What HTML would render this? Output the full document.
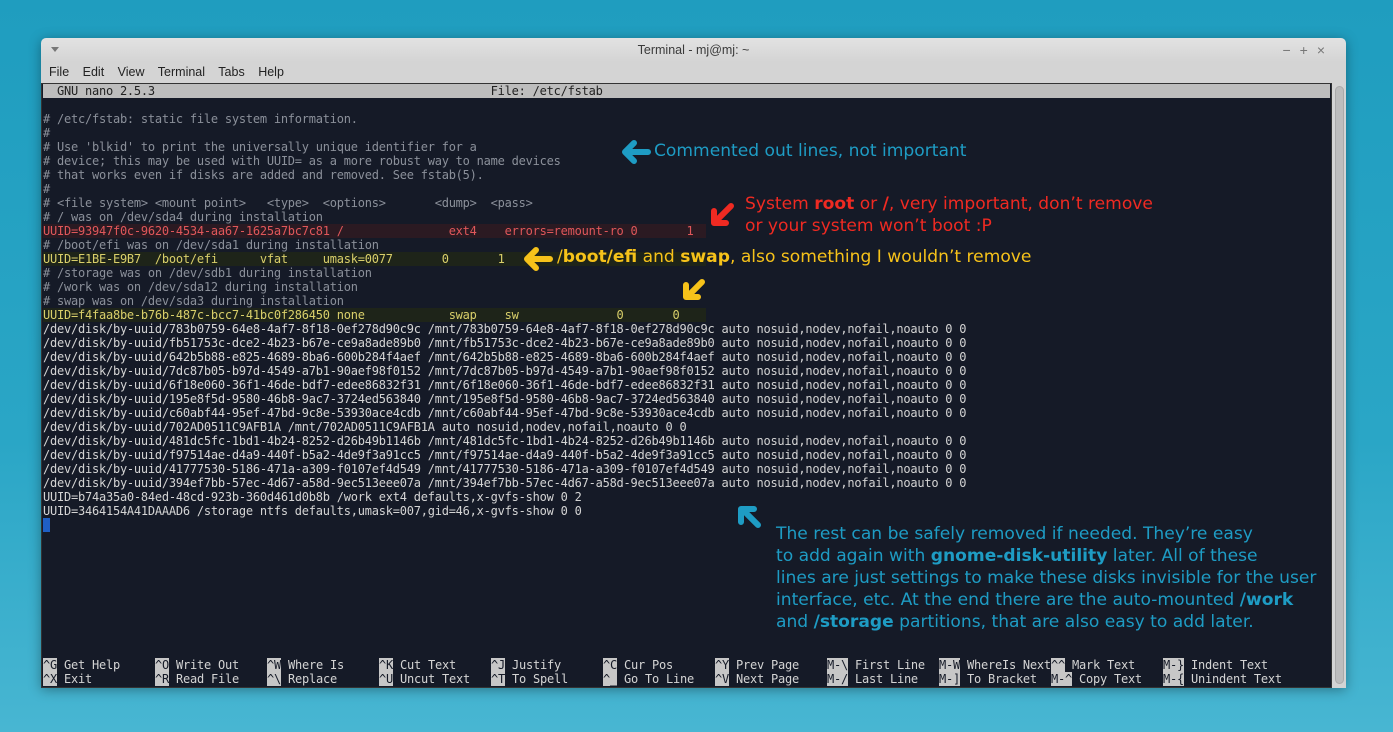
<!DOCTYPE html>
<html><head><meta charset="utf-8"><style>
*{margin:0;padding:0;box-sizing:border-box}
body{width:1393px;height:732px;overflow:hidden;position:relative;background:linear-gradient(180deg,#1f9dbf 0%,#2aa6c6 60%,#48b6d2 100%);font-family:"Liberation Sans",sans-serif}
.win{position:absolute;left:41px;top:38px;width:1305px;height:650px;background:linear-gradient(#e2e2e2,#d4d4d4 24px,#d4d4d4);border-radius:5px 5px 0 0;box-shadow:0 2px 12px rgba(0,0,0,.35)}
.title{position:absolute;left:0;top:5px;width:1305px;text-align:center;font-size:12.5px;color:#3a3a3a}
.menu{position:absolute;left:8px;top:27px;font-size:12.5px;color:#222;word-spacing:0}
.menu span{margin-right:10px}
.term{position:absolute;left:0;top:45px;width:1291px;height:605px;background:#151a27;border:1px solid #333}
.sb{position:absolute;left:1292px;top:45px;width:13px;height:605px;background:#d4d4d4}
.sb div{position:absolute;left:2px;top:3px;width:9px;height:598px;background:#bdbdbd;border-radius:5px;border:1px solid #aaa}
pre{position:absolute;font-family:"DejaVu Sans Mono",monospace;font-size:12px;line-height:14px;color:#d4d4d4;letter-spacing:-0.23px}
.r{position:absolute;left:1px;height:14px;white-space:pre}
.c{color:#8b909a}
.hd{position:absolute;left:1px;top:0;width:1287px;height:14px;background:#bdbdbd;color:#222}
.red{color:#e0575a;background:#2b1a22;width:663px}
.yel{color:#d9cf6a;background:#1e2419;width:663px}
.k{background:#c7c7c7;color:#151a27}
.a{position:absolute;font-family:"DejaVu Sans",sans-serif;font-size:17.1px;white-space:nowrap}
.bl{color:#1e9cc4}.rd{color:#ef2a22}.yl{color:#f6c21a}
</style></head><body>
<div class="win">
<div style="position:absolute;left:10px;top:9px;width:0;height:0;border-left:4px solid transparent;border-right:4px solid transparent;border-top:5px solid #777"></div>
<div class="title">Terminal - mj@mj: ~</div>
<div style="position:absolute;right:12px;top:4px;font-size:14px;color:#777;letter-spacing:9px">−+×</div>
<div class="menu"><span>File</span> <span>Edit</span> <span>View</span> <span>Terminal</span> <span>Tabs</span> <span>Help</span></div>
<div class="term">
<pre style="left:0;top:0;width:1290px;height:603px">
<div class="hd">  GNU nano 2.5.3                                                File: /etc/fstab</div>
<div class="r c" style="top:28px"># /etc/fstab: static file system information.</div>
<div class="r c" style="top:42px">#</div>
<div class="r c" style="top:56px"># Use 'blkid' to print the universally unique identifier for a</div>
<div class="r c" style="top:70px"># device; this may be used with UUID= as a more robust way to name devices</div>
<div class="r c" style="top:84px"># that works even if disks are added and removed. See fstab(5).</div>
<div class="r c" style="top:98px">#</div>
<div class="r c" style="top:112px"># &lt;file system&gt; &lt;mount point&gt;   &lt;type&gt;  &lt;options&gt;       &lt;dump&gt;  &lt;pass&gt;</div>
<div class="r c" style="top:126px"># / was on /dev/sda4 during installation</div>
<div class="r red" style="top:140px">UUID=93947f0c-9620-4534-aa67-1625a7bc7c81 /               ext4    errors=remount-ro 0       1</div>
<div class="r c" style="top:154px"># /boot/efi was on /dev/sda1 during installation</div>
<div class="r yel" style="top:168px">UUID=E1BE-E9B7  /boot/efi      vfat     umask=0077       0       1</div>
<div class="r c" style="top:182px"># /storage was on /dev/sdb1 during installation</div>
<div class="r c" style="top:196px"># /work was on /dev/sda12 during installation</div>
<div class="r c" style="top:210px"># swap was on /dev/sda3 during installation</div>
<div class="r yel" style="top:224px">UUID=f4faa8be-b76b-487c-bcc7-41bc0f286450 none            swap    sw              0       0</div>
<div class="r" style="top:238px">/dev/disk/by-uuid/783b0759-64e8-4af7-8f18-0ef278d90c9c /mnt/783b0759-64e8-4af7-8f18-0ef278d90c9c auto nosuid,nodev,nofail,noauto 0 0
/dev/disk/by-uuid/fb51753c-dce2-4b23-b67e-ce9a8ade89b0 /mnt/fb51753c-dce2-4b23-b67e-ce9a8ade89b0 auto nosuid,nodev,nofail,noauto 0 0
/dev/disk/by-uuid/642b5b88-e825-4689-8ba6-600b284f4aef /mnt/642b5b88-e825-4689-8ba6-600b284f4aef auto nosuid,nodev,nofail,noauto 0 0
/dev/disk/by-uuid/7dc87b05-b97d-4549-a7b1-90aef98f0152 /mnt/7dc87b05-b97d-4549-a7b1-90aef98f0152 auto nosuid,nodev,nofail,noauto 0 0
/dev/disk/by-uuid/6f18e060-36f1-46de-bdf7-edee86832f31 /mnt/6f18e060-36f1-46de-bdf7-edee86832f31 auto nosuid,nodev,nofail,noauto 0 0
/dev/disk/by-uuid/195e8f5d-9580-46b8-9ac7-3724ed563840 /mnt/195e8f5d-9580-46b8-9ac7-3724ed563840 auto nosuid,nodev,nofail,noauto 0 0
/dev/disk/by-uuid/c60abf44-95ef-47bd-9c8e-53930ace4cdb /mnt/c60abf44-95ef-47bd-9c8e-53930ace4cdb auto nosuid,nodev,nofail,noauto 0 0
/dev/disk/by-uuid/702AD0511C9AFB1A /mnt/702AD0511C9AFB1A auto nosuid,nodev,nofail,noauto 0 0
/dev/disk/by-uuid/481dc5fc-1bd1-4b24-8252-d26b49b1146b /mnt/481dc5fc-1bd1-4b24-8252-d26b49b1146b auto nosuid,nodev,nofail,noauto 0 0
/dev/disk/by-uuid/f97514ae-d4a9-440f-b5a2-4de9f3a91cc5 /mnt/f97514ae-d4a9-440f-b5a2-4de9f3a91cc5 auto nosuid,nodev,nofail,noauto 0 0
/dev/disk/by-uuid/41777530-5186-471a-a309-f0107ef4d549 /mnt/41777530-5186-471a-a309-f0107ef4d549 auto nosuid,nodev,nofail,noauto 0 0
/dev/disk/by-uuid/394ef7bb-57ec-4d67-a58d-9ec513eee07a /mnt/394ef7bb-57ec-4d67-a58d-9ec513eee07a auto nosuid,nodev,nofail,noauto 0 0
UUID=b74a35a0-84ed-48cd-923b-360d461d0b8b /work ext4 defaults,x-gvfs-show 0 2
UUID=3464154A41DAAAD6 /storage ntfs defaults,umask=007,gid=46,x-gvfs-show 0 0</div>
<div style="position:absolute;left:1px;top:434px;width:7px;height:14px;background:#1f5fc4"></div>
<div class="r" style="top:574px"><span class="k">^G</span> Get Help</div><div class="r" style="top:588px"><span class="k">^X</span> Exit</div>
<div class="r" style="top:574px;left:113px"><span class="k">^O</span> Write Out</div><div class="r" style="top:588px;left:113px"><span class="k">^R</span> Read File</div>
<div class="r" style="top:574px;left:225px"><span class="k">^W</span> Where Is</div><div class="r" style="top:588px;left:225px"><span class="k">^\</span> Replace</div>
<div class="r" style="top:574px;left:337px"><span class="k">^K</span> Cut Text</div><div class="r" style="top:588px;left:337px"><span class="k">^U</span> Uncut Text</div>
<div class="r" style="top:574px;left:449px"><span class="k">^J</span> Justify</div><div class="r" style="top:588px;left:449px"><span class="k">^T</span> To Spell</div>
<div class="r" style="top:574px;left:561px"><span class="k">^C</span> Cur Pos</div><div class="r" style="top:588px;left:561px"><span class="k">^_</span> Go To Line</div>
<div class="r" style="top:574px;left:673px"><span class="k">^Y</span> Prev Page</div><div class="r" style="top:588px;left:673px"><span class="k">^V</span> Next Page</div>
<div class="r" style="top:574px;left:785px"><span class="k">M-\</span> First Line</div><div class="r" style="top:588px;left:785px"><span class="k">M-/</span> Last Line</div>
<div class="r" style="top:574px;left:897px"><span class="k">M-W</span> WhereIs Next</div><div class="r" style="top:588px;left:897px"><span class="k">M-]</span> To Bracket</div>
<div class="r" style="top:574px;left:1009px"><span class="k">^^</span> Mark Text</div><div class="r" style="top:588px;left:1009px"><span class="k">M-^</span> Copy Text</div>
<div class="r" style="top:574px;left:1121px"><span class="k">M-}</span> Indent Text</div><div class="r" style="top:588px;left:1121px"><span class="k">M-{</span> Unindent Text</div>
</pre>
</div>
<div class="sb"><div></div></div>
</div>
<svg style="position:absolute;left:0;top:0" width="1393" height="732">
<g fill="none" stroke-linecap="round" stroke-linejoin="round" stroke-width="6">
<path d="M648 152 H626 M634 143 L625 152 L634 161" stroke="#1e9cc4"/>
<path d="M731 206 L715 222 M714 211 V223 H726" stroke="#ef2a22"/>
<path d="M550 259 H528 M536 250 L527 259 L536 268" stroke="#f6c21a"/>
<path d="M702 282 L688 296 M686 285 V297 H698" stroke="#f6c21a"/>
<path d="M758 525 L744 511 M741 522 V509 H754" stroke="#1e9cc4"/>
</g></svg>
<div class="a bl" style="left:654px;top:141px">Commented out lines, not important</div>
<div class="a rd" style="left:745px;top:193px;line-height:22px">System <b>root</b> or <b>/</b>, very important, don’t remove<br>or your system won’t boot :P</div>
<div class="a yl" style="left:557px;top:247px">/<b>boot/efi</b> and <b>swap</b>, also something I wouldn’t remove</div>
<div class="a bl" style="left:776px;top:523px;line-height:22px">The rest can be safely removed if needed. They’re easy<br>to add again with <b>gnome-disk-utility</b> later. All of these<br>lines are just settings to make these disks invisible for the user<br>interface, etc. At the end there are the auto-mounted <b>/work</b><br>and <b>/storage</b> partitions, that are also easy to add later.</div>
</body></html>
